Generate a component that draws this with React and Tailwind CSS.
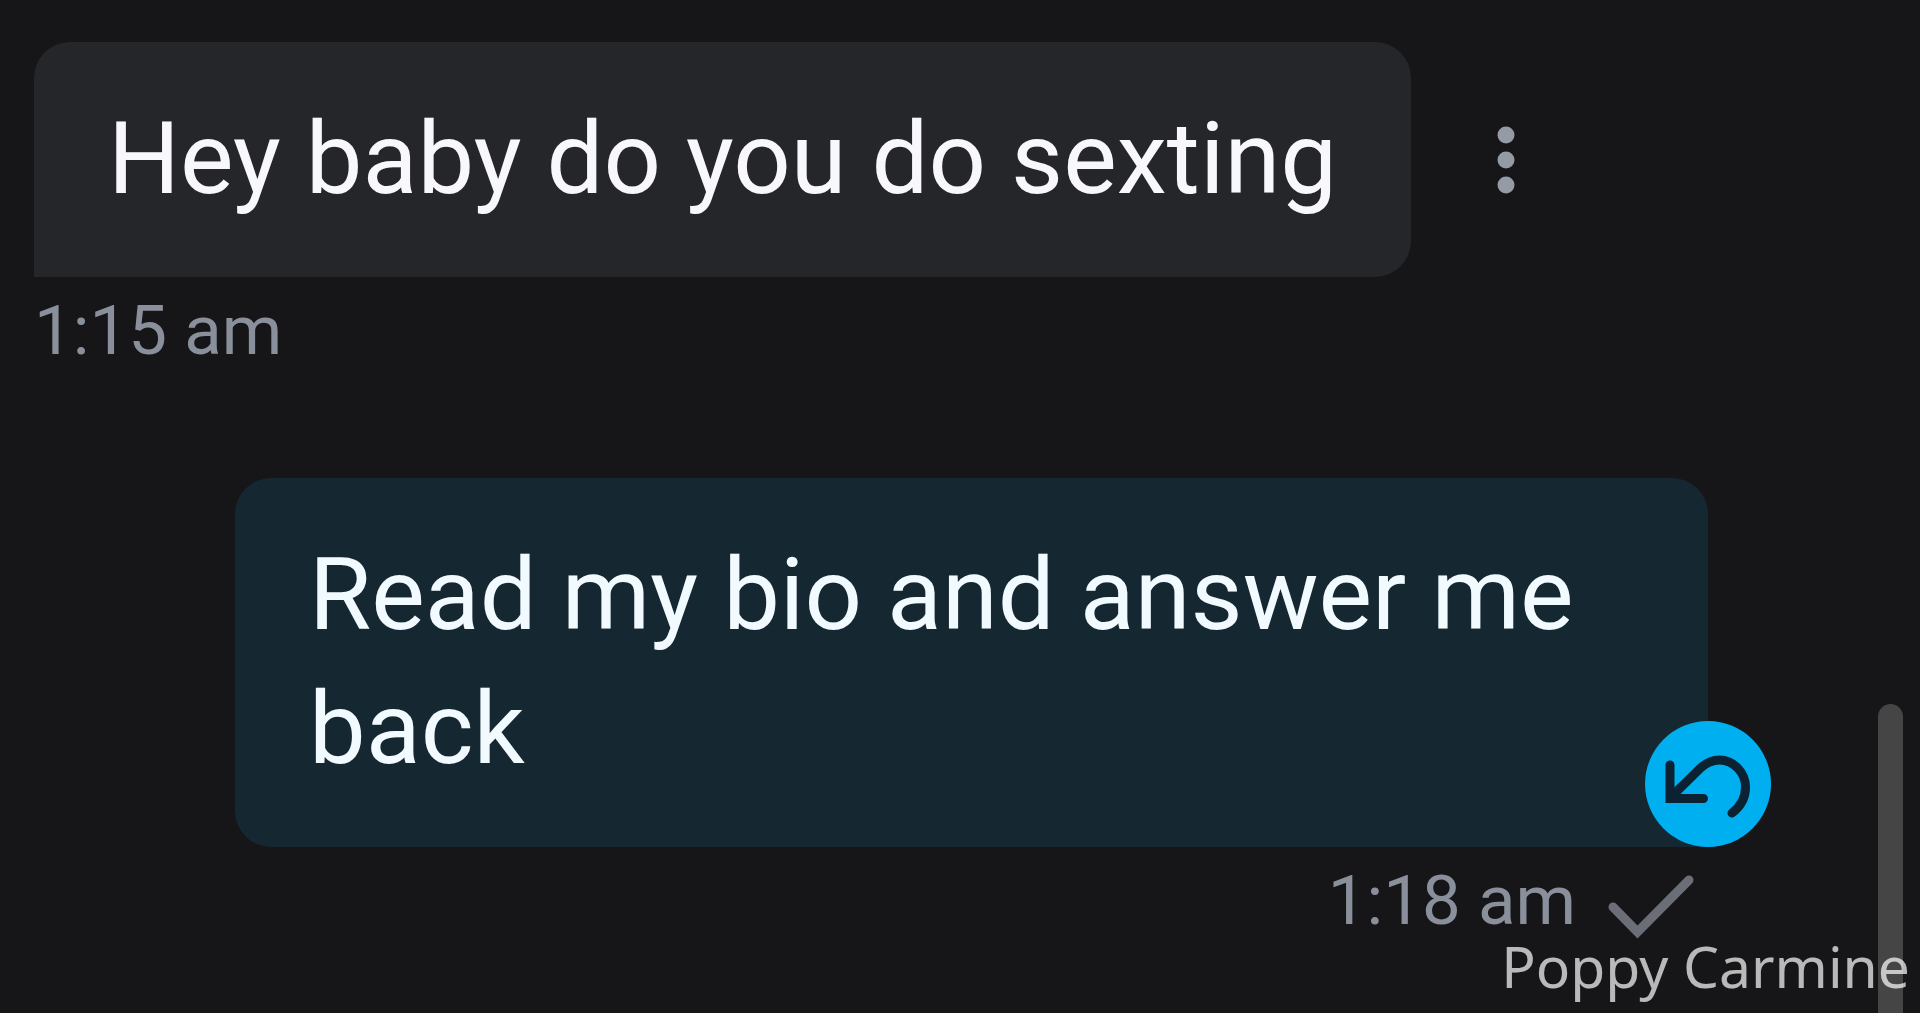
import React from 'react';

const UndoIcon = () => (
  <svg className="w-full h-full" viewBox="0 0 126 126" fill="none" stroke="#0b2233" strokeWidth="9" strokeLinecap="round" aria-hidden="true">
    <path d="M25 44V77.5H58.5" />
    <path d="M27 75L55.500 47C62 41 68 39 74.500 39C89 39 100.500 52 100.500 66C100.500 77 95 86 87 92" />
  </svg>
);

const CheckIcon = () => (
  <svg className="w-[86px] h-[66px]" viewBox="0 0 86 66" fill="none" stroke="#6b6e76" strokeWidth="9" strokeLinecap="round" aria-hidden="true">
    <path d="M5 33L29.500 58L81 6" />
  </svg>
);

const DotsIcon = () => (
  <svg className="w-[18px] h-[68px]" viewBox="0 0 18 68" fill="#949ba5" aria-hidden="true">
    <circle cx="9" cy="9" r="8.500" />
    <circle cx="9" cy="34" r="8.500" />
    <circle cx="9" cy="59" r="8.500" />
  </svg>
);

const App = () => {
  return (
    <div className="relative min-h-screen overflow-hidden bg-[#161618] pt-[42px] pl-[34px] pr-[212px] font-['Roboto',sans-serif]">
      {/* Incoming message */}
      <div>
        <div className="flex items-center gap-[86px]">
          <p className="rounded-[36px] rounded-bl-none bg-[#252629] px-[74px] pt-[50px] pb-[51px] text-[101px] leading-[134px] text-[#f8f8fc]">
            Hey baby do you do sexting
          </p>
          <button type="button" aria-label="Message options">
            <DotsIcon />
          </button>
        </div>
        <time className="mt-[7px] block text-[69px] leading-[94px] text-[#8a909b]">1:15 am</time>
      </div>

      {/* Outgoing message */}
      <div className="mt-[100px] flex flex-col items-end">
        <div className="relative max-w-[1473px] rounded-[36px] rounded-br-none bg-[#152731] px-[74px] pt-[50px] pb-[51px]">
          <p className="text-[101px] leading-[134px] text-[#f1faff]">Read my bio and answer me back</p>
          <button
            type="button"
            aria-label="Unsend message"
            className="absolute -right-[63px] bottom-0 w-[126px] h-[126px] rounded-full bg-[#00aff0]"
          >
            <UndoIcon />
          </button>
        </div>
        <div className="mt-[7px] flex items-center gap-8 pr-[14px]">
          <time className="text-[69px] leading-[94px] text-[#8a909b]">1:18 am</time>
          <span className="pt-3">
            <CheckIcon />
          </span>
        </div>
      </div>

      {/* Scrollbar thumb */}
      <div className="absolute right-[17px] top-[704px] -bottom-4 w-[25px] rounded-full bg-[#454546]" />

      {/* Name label */}
      <span className="absolute right-[10px] bottom-[3px] font-['Noto_Sans',sans-serif] text-[57px] leading-[88px] text-white/70">
        Poppy Carmine
      </span>
    </div>
  );
};

export default App;
